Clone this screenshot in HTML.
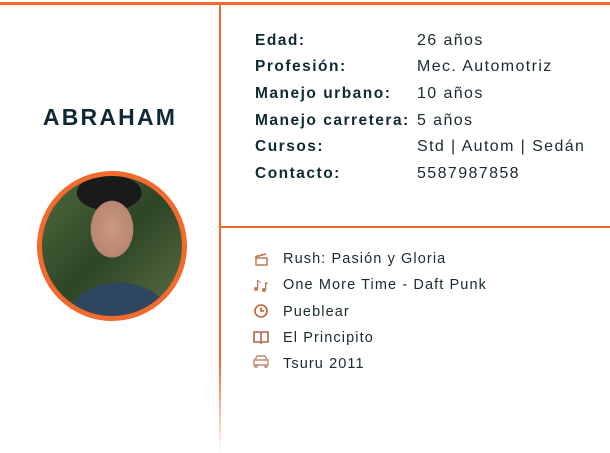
<!DOCTYPE html>
<html><head><meta charset="utf-8"><style>
*{margin:0;padding:0;box-sizing:border-box}
body{width:610px;height:453px;background:#fff;position:relative;overflow:hidden;font-family:"Liberation Sans",sans-serif;color:#0f2a33}
.top{position:absolute;left:0;top:2px;width:610px;height:3px;background:#f26a2e}
.vl{position:absolute;left:219px;top:2px;width:2px;height:451px;background:linear-gradient(#f26a2e 0,#f26a2e 360px,rgba(242,106,46,0) 451px)}
.hl{position:absolute;left:219px;top:226px;width:391px;height:2px;background:#f26a2e}
.name{position:absolute;left:0;width:220px;top:104px;text-align:center;font-weight:bold;font-size:23px;letter-spacing:2.2px;color:#0f2a33}
.circ{position:absolute;left:37px;top:171px;width:150px;height:150px;border-radius:50%;border:5px solid #f26a2e;overflow:hidden;background:radial-gradient(ellipse 30px 40px at 50% 38%,#c99a80 0,#b98670 70%,transparent 72%),radial-gradient(ellipse 65px 50px at 55% 105%,#2f4660 0,#2f4660 80%,transparent 82%),radial-gradient(ellipse 40px 22px at 48% 12%,#1a1a1a 0,#1a1a1a 80%,transparent 82%),linear-gradient(135deg,#4d6a3c,#2e4526 50%,#5a7044)}
.lab{position:absolute;left:255px;font-weight:bold;font-size:15.5px;letter-spacing:1.5px}
.val{position:absolute;left:417px;font-size:16px;color:#1a2a30;letter-spacing:1.4px}
.it{position:absolute;left:283px;font-size:14.5px;color:#1a2a30;letter-spacing:1.1px}
.ic{position:absolute;left:253px;width:16px;height:14px}
</style></head><body>
<div class="top"></div><div class="vl"></div><div class="hl"></div>
<div class="name">ABRAHAM</div>
<div class="circ"></div>
<div class="lab" style="top:32px">Edad:</div><div class="val" style="top:32px">26 años</div>
<div class="lab" style="top:58px">Profesión:</div><div class="val" style="top:58px">Mec. Automotriz</div>
<div class="lab" style="top:85px">Manejo urbano:</div><div class="val" style="top:85px">10 años</div>
<div class="lab" style="top:112px">Manejo carretera:</div><div class="val" style="top:112px">5 años</div>
<div class="lab" style="top:138px">Cursos:</div><div class="val" style="top:138px">Std | Autom | Sedán</div>
<div class="lab" style="top:165px">Contacto:</div><div class="val" style="top:165px">5587987858</div>

<svg class="ic" style="top:252px" viewBox="0 0 16 14"><g fill="none" stroke="#c07a55" stroke-width="1.5"><rect x="3" y="6" width="11" height="7"/><path d="M2 5 L13 2 M4 4.5 L5 2.8 M8 3.5 L9 1.8"/></g></svg>
<div class="it" style="top:251px">Rush: Pasión y Gloria</div>
<svg class="ic" style="top:278px" viewBox="0 0 16 14"><g fill="#c07a55"><circle cx="3" cy="11" r="2"/><circle cx="11" cy="12" r="2"/><rect x="4" y="2" width="1.3" height="9"/><rect x="12" y="4" width="1.3" height="8"/><path d="M4 2 L8 4 L8 5 L4 3Z M12 4 L15 5 L15 6 L12 5Z"/></g></svg>
<div class="it" style="top:277px">One More Time - Daft Punk</div>
<svg class="ic" style="top:304px" viewBox="0 0 16 14"><circle cx="8" cy="7" r="6" fill="none" stroke="#c0602e" stroke-width="1.6"/><path d="M8 3.5V7H11" fill="none" stroke="#c0602e" stroke-width="1.6"/></svg>
<div class="it" style="top:304px">Pueblear</div>
<svg class="ic" style="top:330px" viewBox="0 0 16 14"><path d="M1 2 H7 L8 3 L9 2 H15 V12 H9 L8 13 L7 12 H1Z M8 3V12" fill="none" stroke="#b0674a" stroke-width="1.6"/></svg>
<div class="it" style="top:330px">El Principito</div>
<svg class="ic" style="top:354px" viewBox="0 0 16 14"><path d="M4 2H12L14 6H2Z M1 6H15V11H1Z M2 11V13H4V11 M12 11V13H14V11" fill="none" stroke="#c08a70" stroke-width="1.4"/></svg>
<div class="it" style="top:356px">Tsuru 2011</div>
</body></html>
